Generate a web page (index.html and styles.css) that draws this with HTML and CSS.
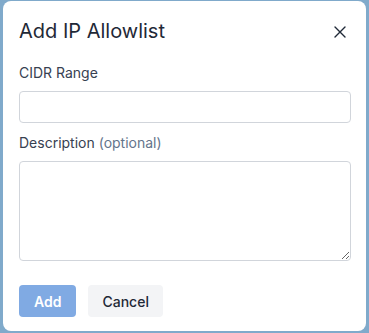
FILE: index.html
```html
<!DOCTYPE html>
<html lang="en">
<head>
<meta charset="utf-8">
<title>Add IP Allowlist</title>
<link rel="stylesheet" href="styles.css">
</head>
<body>
<div class="modal">
  <div class="modal-header">
    <h2 class="modal-title">Add IP Allowlist</h2>
    <button class="close-btn" aria-label="Close">
      <svg width="12" height="12" viewBox="0 0 12 12" fill="none" stroke="#1f2937" stroke-width="1.4" stroke-linecap="round"><path d="M1 1L11 11M11 1L1 11"/></svg>
    </button>
  </div>
  <div class="field">
    <label class="label">CIDR Range</label>
    <input class="input" type="text">
  </div>
  <div class="field">
    <label class="label">Description <span class="optional">(optional)</span></label>
    <textarea class="textarea"></textarea>
  </div>
  <div class="actions">
    <button class="btn btn-primary" disabled>Add</button>
    <button class="btn btn-secondary">Cancel</button>
  </div>
</div>
</body>
</html>
```
FILE: styles.css
```css
* { box-sizing: border-box; }
html, body { margin: 0; padding: 0; }
body {
  background: #80aacb;
  font-family: Inter, "Noto Sans", sans-serif;
  width: 369px;
  height: 333px;
  overflow: hidden;
  padding: 1px 3px 0 3px;
}
.modal {
  background: #ffffff;
  border-radius: 8px;
  width: 363px;
  height: 330px;
  padding: 16px 15px 14px 16px;
  display: flex;
  flex-direction: column;
}
.modal-header {
  display: flex;
  align-items: center;
  justify-content: space-between;
  height: 28px;
  margin-bottom: 18px;
}
.modal-title {
  margin: 0;
  font-size: 20px;
  line-height: 28px;
  font-weight: 400;
  color: #1f2937;
}
.close-btn {
  background: none;
  border: 0;
  padding: 0;
  width: 20px;
  height: 20px;
  display: flex;
  align-items: center;
  justify-content: center;
  margin-right: 1px;
  margin-top: 2px;
}
.field {
  display: flex;
  flex-direction: column;
  gap: 8px;
  margin-bottom: 10px;
}
.label {
  font-size: 14px;
  line-height: 20px;
  color: #374151;
}
.optional { color: #64748b; }
.input {
  height: 32px;
  border: 1px solid #d1d5db;
  border-radius: 4px;
  width: 100%;
  font: inherit;
}
.textarea {
  height: 100px;
  border: 1px solid #d1d5db;
  border-radius: 4px;
  width: 100%;
  font: inherit;
  resize: vertical;
}
.actions {
  display: flex;
  gap: 12px;
  margin-top: 14px;
}
.btn {
  height: 32px;
  padding: 0 15px;
  border: 0;
  border-radius: 4px;
  font-family: inherit;
  font-size: 14px;
}
.btn-primary {
  background: #80aae3;
  color: #ffffff;
  font-weight: 600;
}
.btn-secondary {
  background: #f3f4f6;
  color: #1f2937;
  font-weight: 500;
  padding: 0 14px;
}
```
